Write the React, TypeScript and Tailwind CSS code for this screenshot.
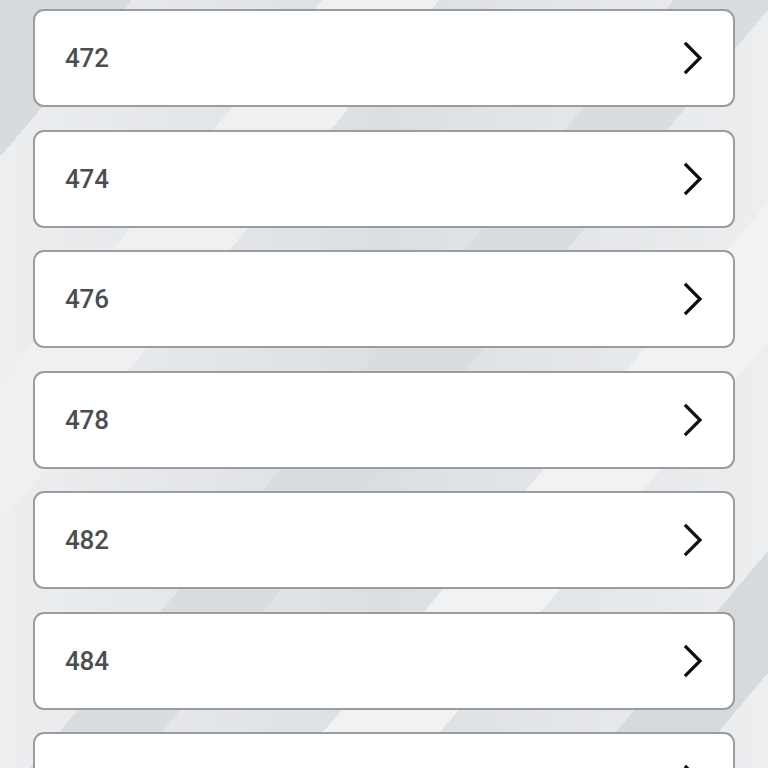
import React from "react";

const rooms = ["472", "474", "476", "478", "482", "484", "486"];

function Chevron() {
  return (
    <svg width="22" height="34" viewBox="0 0 22 34" fill="none" className="shrink-0">
      <path d="M4 3 L18 17 L4 31" stroke="#0d0d0d" strokeWidth="3.2" strokeLinecap="square" strokeLinejoin="miter" />
    </svg>
  );
}

export default function App() {
  return (
    <div className="min-h-[768px] w-full overflow-hidden bg-[#e6e8ea] bg-[linear-gradient(130deg,#d8dbde_0_9%,transparent_9%_22%,#eef0f1_22%_30%,transparent_30%_46%,#dadde0_46%_53%,transparent_53%_64%,#f1f2f3_64%_72%,transparent_72%_84%,#d7dadd_84%_91%,transparent_91%),linear-gradient(90deg,#eceef0,#dcdfe2_50%,#eceef0)]">
      <div className="flex flex-col gap-[22.5px] px-[33px] pt-[9px]">
        {rooms.map((r) => (
          <div
            key={r}
            className="flex items-center justify-between h-[98px] shrink-0 rounded-[11px] border-2 border-[#9b9c9e] bg-white pl-[30px] pr-[29px]"
          >
            <span className="text-[26px] leading-none font-medium text-[#4a4e53] font-['Roboto',sans-serif] tracking-[-0.2px]">
              {r}
            </span>
            <Chevron />
          </div>
        ))}
      </div>
    </div>
  );
}
